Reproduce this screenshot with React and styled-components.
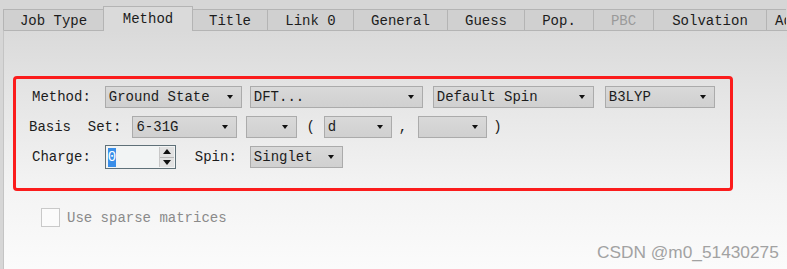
import React from "react";
import styled, { createGlobalStyle } from "styled-components";

const Global = createGlobalStyle`
  html, body { margin: 0; padding: 0; background: #d6d6d6; }
  * { box-sizing: border-box; }
`;

const Screen = styled.div`
  position: relative;
  width: 787px;
  height: 269px;
  overflow: hidden;
  background: #d6d6d6;
  font-family: "Liberation Mono", "DejaVu Sans Mono", monospace;
  font-size: 14px;
  color: #1c1c1c;
  display: flex;
  flex-direction: column;
`;

const TabBar = styled.div`
  display: flex;
  align-items: flex-end;
  height: 30px;
  padding-left: 3px;
  position: relative;
  z-index: 2;
  flex: none;
`;

const Tab = styled.div`
  flex: none;
  width: ${(p) => p.$w}px;
  height: ${(p) => (p.$active ? 25 : 21)}px;
  margin-bottom: ${(p) => (p.$active ? -1 : 0)}px;
  display: flex;
  align-items: center;
  justify-content: ${(p) => (p.$clip ? "flex-start" : "center")};
  padding-left: ${(p) => (p.$clip ? 8 : 0)}px;
  overflow: hidden;
  white-space: nowrap;
  border: 1px solid #b4b4b4;
  border-bottom: none;
  border-right: ${(p) => (p.$active ? "1px solid #b4b4b4" : "none")};
  margin-right: ${(p) => (p.$active ? -1 : 0)}px;
  background: ${(p) => (p.$active ? "#dadada" : "#d0d0d0")};
  color: ${(p) => (p.$disabled ? "#9a9a9a" : "#1c1c1c")};
  padding-top: ${(p) => (p.$active ? 0 : 1)}px;
  position: relative;
  z-index: ${(p) => (p.$active ? 2 : 1)};
`;

const Panel = styled.div`
  flex: 1;
  margin-left: 3px;
  border-top: 1px solid #b4b4b4;
  border-left: 1px solid #c4c4c4;
  background: linear-gradient(to bottom, #dadada 0%, #e6e6e6 30%, #f3f3f3 65%, #fbfbfb 100%);
  padding: 45px 0 0 9px;
`;

const Highlight = styled.div`
  width: 720px;
  height: 115px;
  border: 3px solid #fb1c1c;
  border-radius: 4px;
  padding: 3px 0 0 0;
  display: flex;
  flex-direction: column;
`;

const Row = styled.div`
  display: flex;
  align-items: center;
  height: 30px;
  padding-left: ${(p) => p.$pl}px;
`;

const Label = styled.span`
  flex: none;
  white-space: pre;
  margin-left: ${(p) => p.$ml || 0}px;
`;

const SelectBox = styled.div`
  flex: none;
  width: ${(p) => p.$w}px;
  height: 22px;
  margin-left: ${(p) => p.$ml || 0}px;
  border: 1px solid #ababab;
  background: linear-gradient(to bottom, #d9d9d9, #d0d0d0);
  display: flex;
  align-items: center;
  padding: 0 8px 0 3px;
`;

const SelectText = styled.span`
  flex: 1;
  white-space: pre;
  overflow: hidden;
`;

const Arrow = styled.span`
  flex: none;
  width: 0;
  height: 0;
  border-left: 3px solid transparent;
  border-right: 3px solid transparent;
  border-top: 4px solid #111;
`;

const Spinner = styled.div`
  flex: none;
  width: ${(p) => p.$w}px;
  height: 24px;
  margin-left: ${(p) => p.$ml}px;
  border: 1px solid #5f7078;
  background: #f2f4f4;
  display: flex;
  align-items: stretch;
  padding: 1px;
`;

const SpinValue = styled.div`
  flex: 1;
  display: flex;
  align-items: center;
  padding-left: 1px;
`;

const Selected = styled.span`
  background: #3a8ee8;
  color: #ffffff;
  line-height: 19px;
`;

const SpinButtons = styled.div`
  flex: none;
  width: 15px;
  display: flex;
  flex-direction: column;
  border-left: 1px solid #c8c8c8;
  background: #e2e2e2;
`;

const SpinBtn = styled.div`
  flex: 1;
  display: flex;
  align-items: center;
  justify-content: center;
  border-bottom: ${(p) => (p.$top ? "1px solid #b8b8b8" : "none")};
`;

const TriUp = styled.span`
  width: 0;
  height: 0;
  border-left: 4px solid transparent;
  border-right: 4px solid transparent;
  border-bottom: 5px solid #111;
`;

const TriDown = styled.span`
  width: 0;
  height: 0;
  border-left: 4px solid transparent;
  border-right: 4px solid transparent;
  border-top: 5px solid #111;
`;

const CheckRow = styled.div`
  display: flex;
  align-items: center;
  margin: 17px 0 0 28px;
  color: #8a8a8a;
`;

const CheckBox = styled.span`
  width: 19px;
  height: 19px;
  border: 1px solid #c9c9c9;
  background: #fbfbfb;
  margin-right: 7px;
  flex: none;
`;

const Watermark = styled.div`
  position: absolute;
  left: 597px;
  top: 242px;
  font-family: "Liberation Sans", Arial, sans-serif;
  font-size: 17.3px;
  color: #a2a2a2;
  white-space: nowrap;
`;

const tabs = [
  { t: "Job Type", w: 100 },
  { t: "Method", w: 90, active: true },
  { t: "Title", w: 75 },
  { t: "Link 0", w: 86 },
  { t: "General", w: 94 },
  { t: "Guess", w: 77 },
  { t: "Pop.", w: 69 },
  { t: "PBC", w: 60, disabled: true },
  { t: "Solvation", w: 113 },
  { t: "Add. Inp.", w: 20, clip: true },
];

const Select = ({ w, ml, children }) => (
  <SelectBox $w={w} $ml={ml}>
    <SelectText>{children}</SelectText>
    <Arrow />
  </SelectBox>
);

export default function App() {
  return (
    <Screen>
      <Global />
      <TabBar>
        {tabs.map((tb) => (
          <Tab
            key={tb.t}
            $w={tb.w}
            $active={tb.active}
            $disabled={tb.disabled}
            $clip={tb.clip}
          >
            {tb.t}
          </Tab>
        ))}
      </TabBar>
      <Panel>
        <Highlight>
          <Row $pl={16}>
            <Label>Method:</Label>
            <Select w={137} ml={14}>Ground State</Select>
            <Select w={173} ml={8}>DFT...</Select>
            <Select w={161} ml={10}>Default Spin</Select>
            <Select w={110} ml={11}>B3LYP</Select>
          </Row>
          <Row $pl={13}>
            <Label>Basis  Set:</Label>
            <Select w={105} ml={11}>6-31G</Select>
            <Select w={51} ml={9}>{""}</Select>
            <Label $ml={9}>(</Label>
            <Select w={68} ml={9}>d</Select>
            <Label $ml={7}>,</Label>
            <Select w={69} ml={11}>{""}</Select>
            <Label $ml={6}>)</Label>
          </Row>
          <Row $pl={16}>
            <Label>Charge:</Label>
            <Spinner $w={71} $ml={14}>
              <SpinValue>
                <Selected>0</Selected>
              </SpinValue>
              <SpinButtons>
                <SpinBtn $top>
                  <TriUp />
                </SpinBtn>
                <SpinBtn>
                  <TriDown />
                </SpinBtn>
              </SpinButtons>
            </Spinner>
            <Label $ml={19}>Spin:</Label>
            <Select w={93} ml={13}>Singlet</Select>
          </Row>
        </Highlight>
        <CheckRow>
          <CheckBox />
          <span>Use sparse matrices</span>
        </CheckRow>
      </Panel>
      <Watermark>CSDN @m0_51430275</Watermark>
    </Screen>
  );
}
